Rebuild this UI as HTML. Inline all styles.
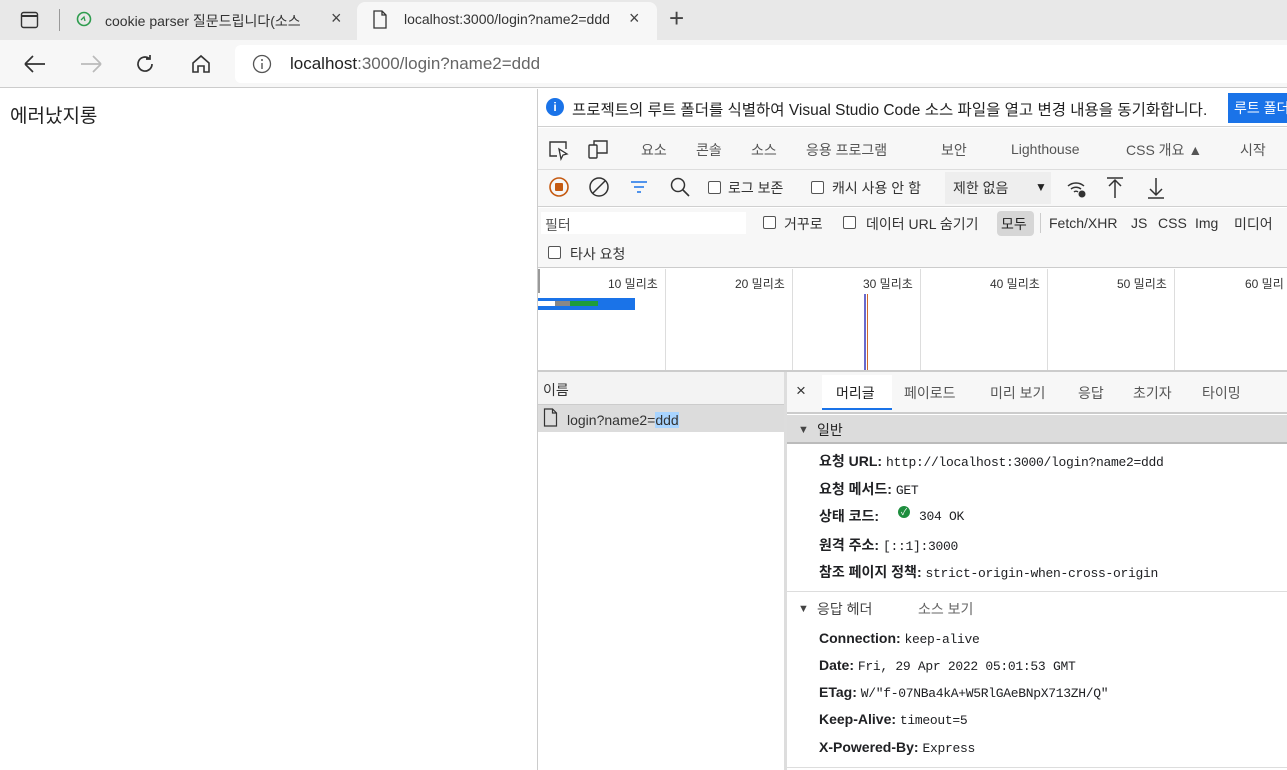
<!DOCTYPE html>
<html><head><meta charset="utf-8"><style>
*{margin:0;padding:0;box-sizing:border-box}
body{width:1287px;height:770px;overflow:hidden;background:#fff;font-family:"Liberation Sans","Noto Sans CJK KR",sans-serif;position:relative;color:#202124}
.a{position:absolute;white-space:nowrap}
.f{font-size:14px}
.m{font-family:"Liberation Mono","Noto Sans CJK KR",monospace;font-size:13px;letter-spacing:-0.3px}
.cb{position:absolute;width:13px;height:13px;border:1px solid #555;border-radius:2px;background:#fff}
</style></head><body>
<div class="a" style="left:0;top:0;width:1287px;height:40px;background:#e8e8e8"></div>
<div class="a" style="left:357px;top:2px;width:300px;height:38px;background:#f7f7f7;border-radius:8px 8px 0 0"></div>
<svg class="a" style="left:20px;top:10px" width="20" height="20"><rect x="1.5" y="2.5" width="16" height="15" rx="2" fill="none" stroke="#333" stroke-width="1.4"/><line x1="1.5" y1="6" x2="17.5" y2="6" stroke="#333" stroke-width="2"/></svg>
<div class="a" style="left:59px;top:9px;width:1px;height:22px;background:#999"></div>
<svg class="a" style="left:76px;top:11px" width="16" height="16"><circle cx="8" cy="8" r="6.5" fill="none" stroke="#2e9c4e" stroke-width="1.6"/><path d="M5 9l3-3 1 4" stroke="#2e9c4e" fill="none" stroke-width="1.3"/></svg>
<div class="a f" style="left:105px;top:11px;color:#333">cookie parser 질문드립니다(소스</div>
<div class="a" style="left:331px;top:8px;font-size:18px;color:#444">×</div>
<svg class="a" style="left:372px;top:10px" width="16" height="20"><path d="M2 1h8l4 4v13H2z M10 1v4h4" fill="none" stroke="#333" stroke-width="1.3"/></svg>
<div class="a f" style="left:404px;top:11px;width:214px;overflow:hidden;color:#333">localhost:3000/login?name2=ddd</div>
<div class="a" style="left:629px;top:8px;font-size:18px;color:#444">×</div>
<div class="a" style="left:669px;top:3px;font-size:26px;font-weight:200;color:#444">+</div>
<div class="a" style="left:0;top:40px;width:1287px;height:48px;background:#f7f7f7;border-bottom:1px solid #ccc"></div>
<svg class="a" style="left:22px;top:52px" width="26" height="24"><path d="M3 12h20M3 12l8-8M3 12l8 8" stroke="#333" fill="none" stroke-width="1.7"/></svg>
<svg class="a" style="left:78px;top:52px" width="26" height="24"><path d="M23 12H3M23 12l-8-8M23 12l-8 8" stroke="#bbb" fill="none" stroke-width="1.7"/></svg>
<svg class="a" style="left:133px;top:52px" width="24" height="24"><path d="M19 12a7 7 0 1 1-3-5.7M17 3v4h-4" stroke="#333" fill="none" stroke-width="1.7"/></svg>
<svg class="a" style="left:189px;top:52px" width="24" height="24"><path d="M4 11l8-7 8 7v9h-5v-6h-6v6H4z" stroke="#333" fill="none" stroke-width="1.6"/></svg>
<div class="a" style="left:235px;top:45px;width:1060px;height:38px;background:#fff;border-radius:6px 0 0 6px"></div>
<svg class="a" style="left:252px;top:54px" width="20" height="20"><circle cx="10" cy="10" r="8.5" fill="none" stroke="#555" stroke-width="1.3"/><line x1="10" y1="9" x2="10" y2="15" stroke="#555" stroke-width="1.4"/><circle cx="10" cy="6" r="1" fill="#555"/></svg>
<div class="a" style="left:290px;top:54px;font-size:17px;color:#222">localhost<span style="color:#666">:3000/login?name2=ddd</span></div>
<div class="a" style="left:10px;top:101px;font-size:19px;color:#222">에러났지롱</div>
<div class="a" style="left:537px;top:89px;width:1px;height:681px;background:#ccc"></div>
<div class="a" style="left:538px;top:89px;width:749px;height:38px;background:#fff;border-bottom:1px solid #d0d0d0"></div>
<div class="a" style="left:546px;top:98px;width:18px;height:18px;border-radius:50%;background:#1a73e8;color:#fff;font-size:12px;font-weight:bold;text-align:center;line-height:18px">i</div>
<div class="a" style="left:572px;top:98px;color:#222;font-size:15.5px">프로젝트의 루트 폴더를 식별하여 Visual Studio Code 소스 파일을 열고 변경 내용을 동기화합니다.</div>
<div class="a f" style="left:1228px;top:93px;width:70px;height:30px;background:#1a73e8;color:#fff;padding:5px 6px">루트 폴더</div>
<div class="a" style="left:538px;top:128px;width:749px;height:42px;background:#f7f7f7;border-bottom:1px solid #ddd"></div>
<svg class="a" style="left:547px;top:139px" width="24" height="22"><path d="M10 17H3V3h16v7" stroke="#333" fill="none" stroke-width="1.4"/><path d="M12 10l2 10 2-4 4-1z" stroke="#333" fill="#fff" stroke-width="1.3"/></svg>
<svg class="a" style="left:587px;top:138px" width="24" height="24"><rect x="2" y="7" width="8" height="13" rx="1" stroke="#333" fill="none" stroke-width="1.4"/><path d="M7 7V3h13v12h-10" stroke="#333" fill="none" stroke-width="1.4"/></svg>
<div class="a f" style="left:641px;top:140px;color:#555">요소</div>
<div class="a f" style="left:696px;top:140px;color:#555">콘솔</div>
<div class="a f" style="left:751px;top:140px;color:#555">소스</div>
<div class="a f" style="left:806px;top:140px;color:#555">응용 프로그램</div>
<div class="a f" style="left:941px;top:140px;color:#555">보안</div>
<div class="a f" style="left:1011px;top:141px;color:#555">Lighthouse</div>
<div class="a f" style="left:1126px;top:140px;color:#555">CSS 개요 ▲</div>
<div class="a f" style="left:1240px;top:140px;color:#555">시작</div>
<div class="a" style="left:538px;top:170px;width:749px;height:37px;background:#f7f7f7;border-bottom:1px solid #d0d0d0"></div>
<svg class="a" style="left:548px;top:176px" width="22" height="22"><circle cx="11" cy="11" r="9" stroke="#c55a11" fill="none" stroke-width="1.6"/><rect x="7" y="7" width="8" height="8" rx="1" fill="#c55a11"/></svg>
<svg class="a" style="left:588px;top:176px" width="22" height="22"><circle cx="11" cy="11" r="9" stroke="#333" fill="none" stroke-width="1.5"/><line x1="5" y1="17" x2="17" y2="5" stroke="#333" stroke-width="1.5"/></svg>
<svg class="a" style="left:629px;top:178px" width="20" height="18"><path d="M2 4h16M5 9h10M8 14h4" stroke="#1a73e8" stroke-width="1.6"/></svg>
<svg class="a" style="left:669px;top:176px" width="22" height="22"><circle cx="9" cy="9" r="6.5" stroke="#333" fill="none" stroke-width="1.5"/><line x1="14" y1="14" x2="20" y2="20" stroke="#333" stroke-width="1.6"/></svg>
<div class="cb" style="left:708px;top:181px"></div><div class="a f" style="left:728px;top:178px;color:#333">로그 보존</div>
<div class="cb" style="left:811px;top:181px"></div><div class="a f" style="left:832px;top:178px;color:#333">캐시 사용 안 함</div>
<div class="a" style="left:945px;top:172px;width:106px;height:32px;background:#eee"></div>
<div class="a f" style="left:953px;top:178px;color:#333">제한 없음</div>
<div class="a" style="left:1035px;top:180px;font-size:12px;color:#222">▼</div>
<svg class="a" style="left:1066px;top:178px" width="22" height="22"><path d="M2 8a12 12 0 0 1 16 0M5 11a8 8 0 0 1 10 0M8 14a3 3 0 0 1 4 0" stroke="#333" fill="none" stroke-width="1.5"/><circle cx="16" cy="16" r="3.5" fill="#333"/></svg>
<svg class="a" style="left:1105px;top:176px" width="20" height="24"><path d="M2 2h16M10 22V5M4 10l6-6 6 6" stroke="#333" fill="none" stroke-width="1.5"/></svg>
<svg class="a" style="left:1146px;top:176px" width="20" height="24"><path d="M2 22h16M10 2v17M4 13l6 6 6-6" stroke="#333" fill="none" stroke-width="1.5"/></svg>
<div class="a" style="left:538px;top:208px;width:749px;height:60px;background:#f7f7f7;border-bottom:1px solid #ccc"></div>
<div class="a" style="left:541px;top:212px;width:205px;height:22px;background:#fff"></div>
<div class="a f" style="left:545px;top:215px;color:#555">필터</div>
<div class="cb" style="left:763px;top:216px"></div><div class="a f" style="left:784px;top:214px;color:#333">거꾸로</div>
<div class="cb" style="left:843px;top:216px"></div><div class="a f" style="left:866px;top:214px;color:#333">데이터 URL 숨기기</div>
<div class="a" style="left:997px;top:211px;width:37px;height:25px;background:#d6d6d6;border-radius:4px"></div>
<div class="a f" style="left:1001px;top:214px;color:#222">모두</div>
<div class="a" style="left:1040px;top:213px;width:1px;height:20px;background:#ccc"></div>
<div class="a f" style="left:1049px;top:215px;color:#333">Fetch/XHR</div>
<div class="a f" style="left:1131px;top:215px;color:#333">JS</div>
<div class="a f" style="left:1158px;top:215px;color:#333">CSS</div>
<div class="a f" style="left:1195px;top:215px;color:#333">Img</div>
<div class="a f" style="left:1234px;top:214px;color:#333">미디어</div>
<div class="cb" style="left:548px;top:246px"></div><div class="a f" style="left:570px;top:244px;color:#333">타사 요청</div>
<div class="a" style="left:538px;top:269px;width:2px;height:24px;background:#999"></div>
<div class="a" style="left:665px;top:269px;width:1px;height:101px;background:#ddd"></div>
<div class="a" style="left:792px;top:269px;width:1px;height:101px;background:#ddd"></div>
<div class="a" style="left:920px;top:269px;width:1px;height:101px;background:#ddd"></div>
<div class="a" style="left:1047px;top:269px;width:1px;height:101px;background:#ddd"></div>
<div class="a" style="left:1174px;top:269px;width:1px;height:101px;background:#ddd"></div>
<div class="a" style="left:608px;top:275px;font-size:12px;color:#333">10 밀리초</div>
<div class="a" style="left:735px;top:275px;font-size:12px;color:#333">20 밀리초</div>
<div class="a" style="left:863px;top:275px;font-size:12px;color:#333">30 밀리초</div>
<div class="a" style="left:990px;top:275px;font-size:12px;color:#333">40 밀리초</div>
<div class="a" style="left:1117px;top:275px;font-size:12px;color:#333">50 밀리초</div>
<div class="a" style="left:1245px;top:275px;font-size:12px;color:#333">60 밀리</div>
<div class="a" style="left:538px;top:298px;width:97px;height:12px;background:#1a73e8"></div>
<div class="a" style="left:538px;top:301px;width:17px;height:5px;background:#fff"></div>
<div class="a" style="left:555px;top:301px;width:15px;height:5px;background:#888"></div>
<div class="a" style="left:570px;top:301px;width:28px;height:5px;background:#1e9c3c"></div>
<div class="a" style="left:864px;top:294px;width:2px;height:76px;background:#6a6acb"></div>
<div class="a" style="left:867px;top:294px;width:1px;height:76px;background:#d06a2a"></div>
<div class="a" style="left:538px;top:370px;width:749px;height:2px;background:#ccc"></div>
<div class="a" style="left:538px;top:372px;width:246px;height:33px;background:#f3f3f3;border-bottom:1px solid #ccc"></div>
<div class="a f" style="left:543px;top:380px;color:#333">이름</div>
<div class="a" style="left:538px;top:405px;width:246px;height:27px;background:#dcdcdc"></div>
<svg class="a" style="left:543px;top:408px" width="16" height="20"><path d="M1.5 1h8l4 4v13h-12z M9.5 1v4h4" fill="none" stroke="#333" stroke-width="1.2"/></svg>
<div class="a f" style="left:567px;top:412px;color:#333">login?name2=<span style="background:#a8d4ff">ddd</span></div>
<div class="a" style="left:784px;top:372px;width:3px;height:398px;background:#ddd"></div>
<div class="a" style="left:787px;top:372px;width:500px;height:42px;background:#f7f7f7;border-bottom:2px solid #ccc"></div>
<div class="a" style="left:796px;top:381px;font-size:17px;color:#333">×</div>
<div class="a" style="left:822px;top:375px;width:70px;height:35px;background:#fff;border-bottom:2px solid #1a73e8"></div>
<div class="a f" style="left:836px;top:383px;color:#222">머리글</div>
<div class="a f" style="left:904px;top:383px;color:#555">페이로드</div>
<div class="a f" style="left:990px;top:383px;color:#555">미리 보기</div>
<div class="a f" style="left:1078px;top:383px;color:#555">응답</div>
<div class="a f" style="left:1133px;top:383px;color:#555">초기자</div>
<div class="a f" style="left:1202px;top:383px;color:#555">타이밍</div>
<div class="a" style="left:787px;top:415px;width:500px;height:29px;background:#dcdcdc;border-bottom:2px solid #bbb"></div>
<div class="a" style="left:798px;top:424px;font-size:11px;color:#444">▼</div>
<div class="a f" style="left:817px;top:420px;color:#222">일반</div>
<div class="a f" style="left:819px;top:451px"><b>요청 URL:</b> <span class="m">http://localhost:3000/login?name2=ddd</span></div>
<div class="a f" style="left:819px;top:479px"><b>요청 메서드:</b> <span class="m">GET</span></div>
<div class="a f" style="left:819px;top:506px"><b>상태 코드:</b></div>
<div class="a" style="left:898px;top:506px;width:12px;height:12px;border-radius:50%;background:#1e8e3e;color:#fff;font-size:9px;text-align:center;line-height:12px">✓</div>
<div class="a m" style="left:919px;top:509px">304 OK</div>
<div class="a f" style="left:819px;top:535px"><b>원격 주소:</b> <span class="m">[::1]:3000</span></div>
<div class="a f" style="left:819px;top:562px"><b>참조 페이지 정책:</b> <span class="m">strict-origin-when-cross-origin</span></div>
<div class="a" style="left:787px;top:591px;width:500px;height:1px;background:#ddd"></div>
<div class="a" style="left:798px;top:603px;font-size:11px;color:#444">▼</div>
<div class="a f" style="left:817px;top:599px;color:#444">응답 헤더</div>
<div class="a f" style="left:918px;top:599px;color:#666">소스 보기</div>
<div class="a f" style="left:819px;top:630px"><b>Connection:</b> <span class="m">keep-alive</span></div>
<div class="a f" style="left:819px;top:657px"><b>Date:</b> <span class="m">Fri, 29 Apr 2022 05:01:53 GMT</span></div>
<div class="a f" style="left:819px;top:684px"><b>ETag:</b> <span class="m">W/"f-07NBa4kA+W5RlGAeBNpX713ZH/Q"</span></div>
<div class="a f" style="left:819px;top:711px"><b>Keep-Alive:</b> <span class="m">timeout=5</span></div>
<div class="a f" style="left:819px;top:739px"><b>X-Powered-By:</b> <span class="m">Express</span></div>
<div class="a" style="left:787px;top:767px;width:500px;height:1px;background:#ddd"></div>
</body></html>
